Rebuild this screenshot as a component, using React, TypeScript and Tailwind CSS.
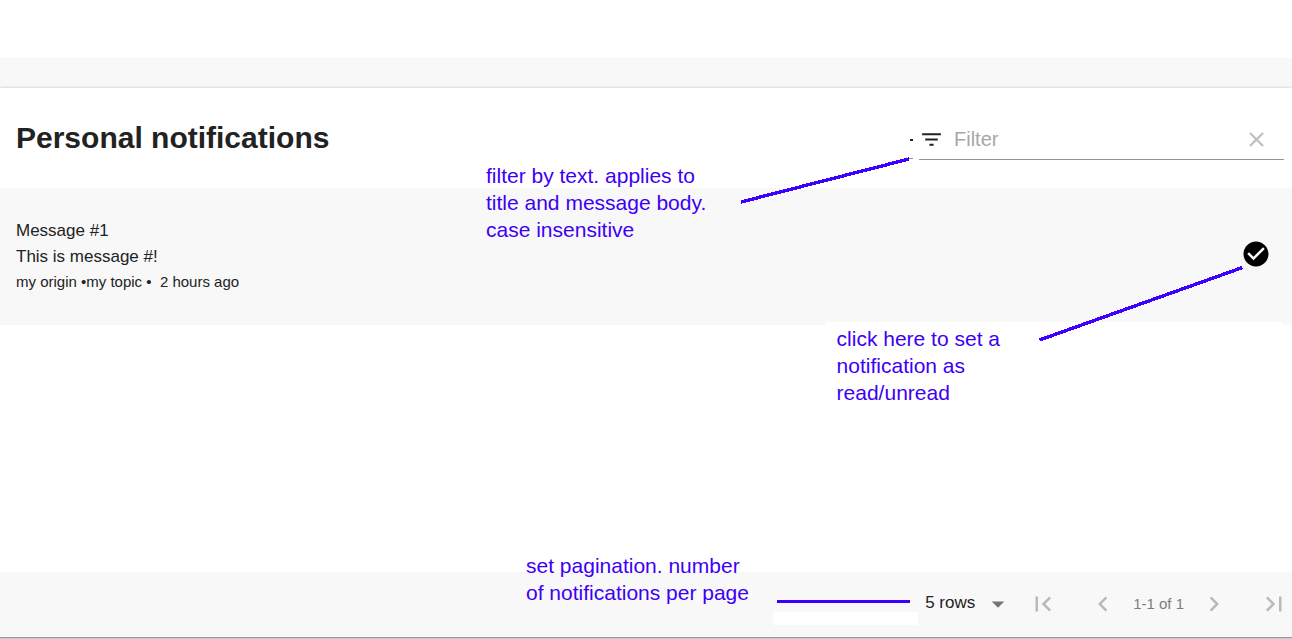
import { useState } from "react";
import type { ReactNode } from "react";
import {
  MdArrowDropDown,
  MdCheckCircle,
  MdChevronLeft,
  MdChevronRight,
  MdClear,
  MdFilterList,
  MdFirstPage,
  MdLastPage,
} from "react-icons/md";

function Note({ place, children }: { place: string; children: ReactNode }) {
  return (
    <p className={`absolute whitespace-nowrap text-[21px] leading-[27px] text-[#3d00f5] ${place}`}>
      {children}
    </p>
  );
}

function PageButton({ label, children }: { label: string; children: ReactNode }) {
  return (
    <button type="button" aria-label={label} disabled className="text-[30px] text-[#b9b9b9]">
      {children}
    </button>
  );
}

function FilterField() {
  const [text, setText] = useState("");
  return (
    <div className="flex h-10 w-[365px] items-center border-b border-[#949494]">
      <label htmlFor="filter" aria-label="Filter" className="text-[25px] text-[#222]">
        <MdFilterList />
      </label>
      <input
        id="filter"
        type="text"
        placeholder="Filter"
        value={text}
        onChange={(e) => setText(e.target.value)}
        className="ml-2.5 min-w-0 flex-1 bg-transparent pb-0.5 text-xl outline-none placeholder:text-[#a7a7a7]"
      />
      <button
        type="button"
        aria-label="Clear filter"
        onClick={() => setText("")}
        className="mr-[15px] text-[25px] text-[#bdbdbd]"
      >
        <MdClear />
      </button>
    </div>
  );
}

function MessageRow() {
  return (
    <article className="relative flex items-start justify-between bg-[#f8f8f8] pt-[30px] pr-[21px] pb-8 pl-4">
      <div className="text-[17px] leading-[26px]">
        <h2>Message #1</h2>
        <p>This is message #!</p>
        <p className="text-[15px] leading-[23px] whitespace-pre">
          my origin •my topic •{"  "}2 hours ago
        </p>
      </div>
      <button type="button" aria-label="Mark as read" className="mt-[21px] text-[30px] text-black">
        <MdCheckCircle />
      </button>
      <div className="absolute right-2.5 bottom-0 h-[3px] w-[456px] bg-white" />
      <Note place="right-[292px] -bottom-[81px]">
        click here to set a<br />
        notification as
        <br />
        read/unread
      </Note>
      <svg
        className="absolute right-[42px] -bottom-[25px]"
        width="220"
        height="90"
        shapeRendering="crispEdges"
        aria-hidden="true"
      >
        <path d="M9.500 80L212.500 7.500" stroke="#3d00ff" strokeWidth="3.400" />
      </svg>
    </article>
  );
}

function Pagination() {
  return (
    <footer className="relative flex h-[67px] items-center justify-end border-b border-[#cacaca] bg-[#f8f8f8] pr-[3px] pb-[2px] shadow-[inset_0_-1px_0_#999]">
      <Note place="left-[526px] -top-[20px]">
        set pagination. number
        <br />
        of notifications per page
      </Note>
      <div className="absolute top-7 right-[382px] h-[3px] w-[133px] bg-[#3d00ff]" />
      <div className="absolute top-10 right-[374px] h-[13px] w-[145px] bg-white" />
      <div className="relative mr-[15px] flex items-center">
        <select
          aria-label="Rows per page"
          defaultValue="5"
          className="w-[88px] appearance-none bg-transparent pb-0.5 text-[17px] outline-none"
        >
          <option value="5">5 rows</option>
          <option value="10">10 rows</option>
          <option value="20">20 rows</option>
        </select>
        <MdArrowDropDown className="pointer-events-none absolute right-0 text-[30px] text-[#757575]" />
      </div>
      <nav aria-label="Pages" className="flex items-center">
        <div className="flex gap-[30px]">
          <PageButton label="First page">
            <MdFirstPage />
          </PageButton>
          <PageButton label="Previous page">
            <MdChevronLeft />
          </PageButton>
        </div>
        <span className="px-[15px] text-[15px] text-[#7c7c7c]">1-1 of 1</span>
        <div className="flex gap-[30px]">
          <PageButton label="Next page">
            <MdChevronRight />
          </PageButton>
          <PageButton label="Last page">
            <MdLastPage />
          </PageButton>
        </div>
      </nav>
    </footer>
  );
}

export default function App() {
  return (
    <div className="flex min-h-screen flex-col overflow-x-hidden bg-[#f8f8f8] font-['Liberation_Sans',Arial,sans-serif] text-[#222]">
      <div className="h-[58px] bg-white" />
      <main className="mt-[30px] flex flex-1 flex-col bg-white shadow-[0_0_3px_rgba(0,0,0,0.22)]">
        <header className="relative z-10 flex h-[100px] items-center justify-between pr-2 pl-4">
          <h1 className="pb-0.5 text-[30px] font-bold">Personal notifications</h1>
          <div className="pt-1">
            <FilterField />
          </div>
          <Note place="left-[486px] top-[74px]">
            filter by text. applies to
            <br />
            title and message body.
            <br />
            case insensitive
          </Note>
          <svg
            className="absolute top-12 right-[372px]"
            width="180"
            height="72"
            shapeRendering="crispEdges"
            aria-hidden="true"
          >
            <rect x="170" y="3" width="3" height="2" fill="#222" />
            <rect x="166" y="22" width="7" height="1" fill="#949494" />
            <path d="M1 66L169 23" stroke="#3d00ff" strokeWidth="3.400" />
          </svg>
        </header>
        <MessageRow />
        <div className="min-h-[100px] flex-1" />
        <Pagination />
      </main>
    </div>
  );
}
